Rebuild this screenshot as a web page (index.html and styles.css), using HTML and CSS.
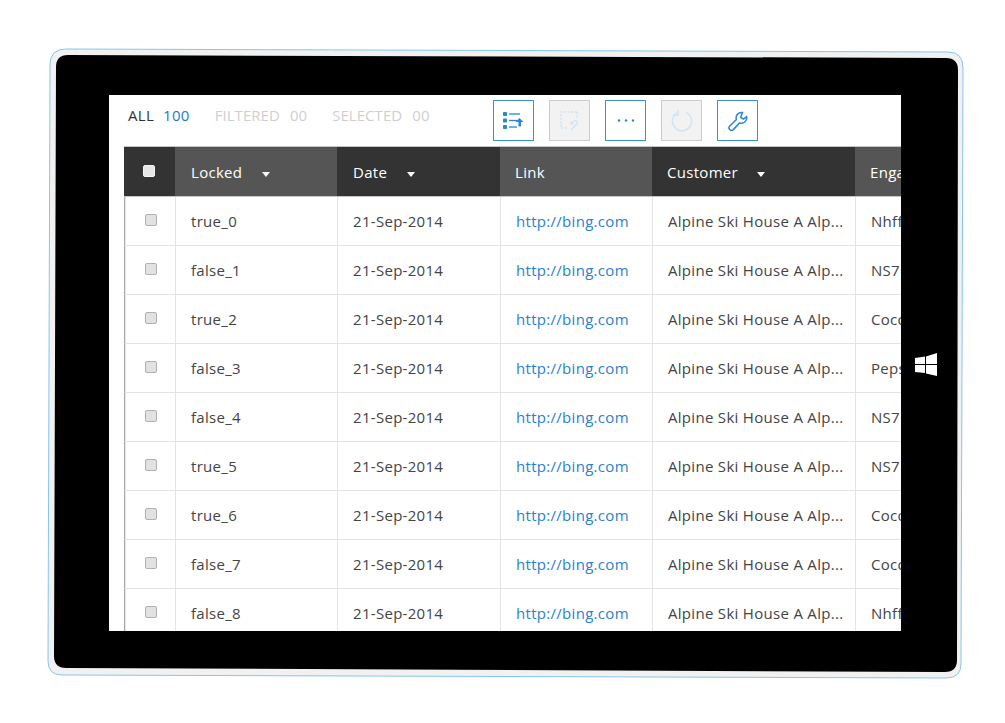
FILE: index.html
```html
<!DOCTYPE html>
<html lang="en">
<head>
<meta charset="utf-8">
<title>Grid</title>
<link rel="stylesheet" href="styles.css">
</head>
<body>
<div class="device">
  <svg class="frame" width="1005" height="723" viewBox="0 0 1005 723" aria-hidden="true">
    <path class="frame-edge" d="M66 49 L948 52 Q963 52 963 68 L961 664 Q961 678 946 678 L62 675 Q48 675 48 661 L50 65 Q50 49 66 49 Z"/>
    <path class="frame-black" d="M68 55 L946 58 Q958 58 958 70 L957 660 Q957 672 945 672 L66 668 Q54 668 54 656 L56 67 Q56 55 68 55 Z"/>
    <path class="frame-logo" d="M915 358 L925 356.6 L925 364 L915 364 Z M926 356.4 L937 353 L937 364 L926 364 Z M915 365 L925 365 L925 373 L915 372 Z M926 365 L937 365 L937 376 L926 373.4 Z"/>
  </svg>
  <main class="screen">
    <div class="toolbar">
      <div class="summary">
        <span class="stat"><span class="stat-label">ALL</span><span class="stat-value">100</span></span>
        <span class="stat stat-off"><span class="stat-label">FILTERED</span><span class="stat-value">00</span></span>
        <span class="stat stat-off"><span class="stat-label">SELECTED</span><span class="stat-value">00</span></span>
      </div>
      <div class="actions">
        <button class="tool" type="button" aria-label="Sort">
          <svg width="21" height="17" viewBox="0 0 21 17"><g class="i-fill"><rect x="0" y="0" width="4" height="4" rx=".8"/><rect x="0" y="6.5" width="4" height="4" rx=".8"/><rect x="0" y="13" width="4" height="4" rx=".8"/><path d="M16.5 6 L20.5 10 L18 10 L18 14.5 L15.5 14.5 L15.5 10 L12.5 10 Z"/></g><g class="i-line"><path d="M6 2 H17"/><path d="M6 8.5 H14"/><path d="M6 15 H14"/></g></svg>
        </button>
        <button class="tool tool-off" type="button" aria-label="Edit">
          <svg width="20" height="20" viewBox="0 0 20 20"><g class="i-line"><path d="M17 1 H1 V17 H7" stroke-dasharray="2 1.6"/><path d="M17 1 V7" stroke-dasharray="2 1.6"/><path d="M11 19 L17 13 A2.2 2.2 0 0 0 14 10"/></g><circle class="i-fill" cx="12" cy="12" r="1.8"/></svg>
        </button>
        <button class="tool" type="button" aria-label="More">
          <svg width="18" height="3" viewBox="0 0 18 3"><g class="i-fill"><circle cx="2" cy="1.5" r="1.2"/><circle cx="9" cy="1.5" r="1.2"/><circle cx="16" cy="1.5" r="1.2"/></g></svg>
        </button>
        <button class="tool tool-off" type="button" aria-label="Refresh">
          <svg width="22" height="22" viewBox="0 0 22 22"><g class="i-line"><path d="M7 2.4 A9.6 9.6 0 1 0 15 2.4"/><path d="M8 1 V6 H3" transform="translate(-1 -1)"/></g></svg>
        </button>
        <button class="tool" type="button" aria-label="Settings">
          <svg width="20" height="20" viewBox="0 0 20 20"><path class="i-line i-wrench" d="M14.5 1.6 A5.4 5.4 0 0 0 8.4 8.6 L1.8 15 A2.5 2.5 0 0 0 5.3 18.6 L11.6 11.9 A5.4 5.4 0 0 0 18.6 5.6 L15.6 8 L12.6 6.4 Z"/></svg>
        </button>
      </div>
    </div>
    <table class="grid">
      <colgroup><col class="c-check"><col class="c-locked"><col class="c-date"><col class="c-link"><col class="c-customer"><col class="c-eng"></colgroup>
      <thead>
        <tr>
          <th class="th-check"><span class="check check-head"></span></th>
          <th class="th-alt th-wide">Locked<span class="caret"></span></th>
          <th class="th-wide">Date<span class="caret"></span></th>
          <th class="th-alt">Link</th>
          <th>Customer<span class="caret caret-near"></span></th>
          <th class="th-alt">Engagement</th>
        </tr>
      </thead>
      <tbody>
        <tr><td class="td-check"><span class="check"></span></td><td>true_0</td><td>21-Sep-2014</td><td><a href="#">http://bing.com</a></td><td>Alpine Ski House A Alp...</td><td>Nhff</td></tr>
        <tr><td class="td-check"><span class="check"></span></td><td>false_1</td><td>21-Sep-2014</td><td><a href="#">http://bing.com</a></td><td>Alpine Ski House A Alp...</td><td>NS7</td></tr>
        <tr><td class="td-check"><span class="check"></span></td><td>true_2</td><td>21-Sep-2014</td><td><a href="#">http://bing.com</a></td><td>Alpine Ski House A Alp...</td><td>Coco</td></tr>
        <tr><td class="td-check"><span class="check"></span></td><td>false_3</td><td>21-Sep-2014</td><td><a href="#">http://bing.com</a></td><td>Alpine Ski House A Alp...</td><td>Peps</td></tr>
        <tr><td class="td-check"><span class="check"></span></td><td>false_4</td><td>21-Sep-2014</td><td><a href="#">http://bing.com</a></td><td>Alpine Ski House A Alp...</td><td>NS7</td></tr>
        <tr><td class="td-check"><span class="check"></span></td><td>true_5</td><td>21-Sep-2014</td><td><a href="#">http://bing.com</a></td><td>Alpine Ski House A Alp...</td><td>NS7</td></tr>
        <tr><td class="td-check"><span class="check"></span></td><td>true_6</td><td>21-Sep-2014</td><td><a href="#">http://bing.com</a></td><td>Alpine Ski House A Alp...</td><td>Coco</td></tr>
        <tr><td class="td-check"><span class="check"></span></td><td>false_7</td><td>21-Sep-2014</td><td><a href="#">http://bing.com</a></td><td>Alpine Ski House A Alp...</td><td>Coco</td></tr>
        <tr><td class="td-check"><span class="check"></span></td><td>false_8</td><td>21-Sep-2014</td><td><a href="#">http://bing.com</a></td><td>Alpine Ski House A Alp...</td><td>Nhff</td></tr>
      </tbody>
    </table>
  </main>
</div>
</body>
</html>
```
FILE: styles.css
```css
* { box-sizing: border-box; }
html, body { margin: 0; padding: 0; background: #fff; }
body {
  font-family: "Open Sans", "Noto Sans", sans-serif;
  font-size: 15px;
  letter-spacing: 0.3px;
  color: #444;
  overflow: hidden;
}
.device {
  position: relative;
  width: 1005px;
  height: 723px;
  padding: 95px 0 0 109px;
}
.frame { position: absolute; left: 0; top: 0; }
.frame-edge { fill: #f1f1f1; stroke: #86c6ec; stroke-width: 1; }
.frame-black { fill: #000; }
.frame-logo { fill: #fff; }
.screen {
  position: relative;
  width: 792px;
  height: 536px;
  background: #fff;
  overflow: hidden;
}
.toolbar {
  display: flex;
  align-items: flex-start;
  height: 51px;
  padding: 5px 0 0 19px;
}
.summary {
  display: flex;
  gap: 25px;
  width: 365px;
  height: 41px;
  line-height: 30px;
}
.stat { display: flex; gap: 9px; }
.stat-label { color: #333; }
.stat-value { color: #1f78c8; }
.stat-off { gap: 10px; }
.stat-off .stat-label, .stat-off .stat-value { color: #cfcfcf; letter-spacing: 0.05px; }
.actions { display: flex; gap: 15px; }
.tool {
  display: flex;
  align-items: center;
  justify-content: center;
  width: 41px;
  height: 41px;
  padding: 0;
  background: #fff;
  border: 1px solid #3b92d8;
}
.i-fill { fill: #2a86d2; }
.i-line { fill: none; stroke: #2a86d2; stroke-width: 1.3; }
.i-wrench { stroke-width: 1.5; }
.tool-off { background: #f2f2f2; border-color: #cdcdcd; }
.tool-off .i-fill { fill: #cfe4f5; }
.tool-off .i-line { stroke: #cfe4f5; stroke-width: 1.5; }
.grid {
  table-layout: fixed;
  border-collapse: separate;
  border-spacing: 0;
  width: 880px;
  margin-left: 15px;
}
.c-check { width: 51px; }
.c-locked { width: 162px; }
.c-date { width: 163px; }
.c-link { width: 152px; }
.c-customer { width: 203px; }
.c-eng { width: 149px; }
.grid th {
  height: 51px;
  padding: 0 0 0 15px;
  text-align: left;
  font-weight: 400;
  color: #fff;
  background: #333;
  border-top: 1px solid #c4c4c4;
  border-bottom: 1px solid #c4c4c4;
  white-space: nowrap;
  overflow: hidden;
}
.grid th.th-alt { background: #555; }
.grid th.th-wide { padding-left: 16px; }
.grid th.th-check { padding: 0 0 1px 19px; }
.caret {
  display: inline-block;
  margin-left: 20px;
  vertical-align: 1px;
  border-top: 5px solid #fff;
  border-left: 4.5px solid transparent;
  border-right: 4.5px solid transparent;
}
.caret-near { margin-left: 19px; }
.grid td {
  height: 49px;
  padding: 0 0 0 15px;
  border-bottom: 1px solid #e3e3e3;
  border-left: 1px solid #e3e3e3;
  white-space: nowrap;
  overflow: hidden;
  background: #fff;
}
.grid td.td-check {
  padding: 0 0 2px 20px;
  border-left: 1px solid #a8a8a8;
  box-shadow: inset 1px 0 #e6e6e6;
}
.grid a { color: #2a7fd0; text-decoration: none; }
.check {
  display: block;
  width: 12px;
  height: 12px;
  background: #e2e2e2;
  border: 1px solid #b0b0b0;
  border-radius: 2px;
}
.check-head { background: #e6e6e6; border-color: #f5f5f5; }
```
